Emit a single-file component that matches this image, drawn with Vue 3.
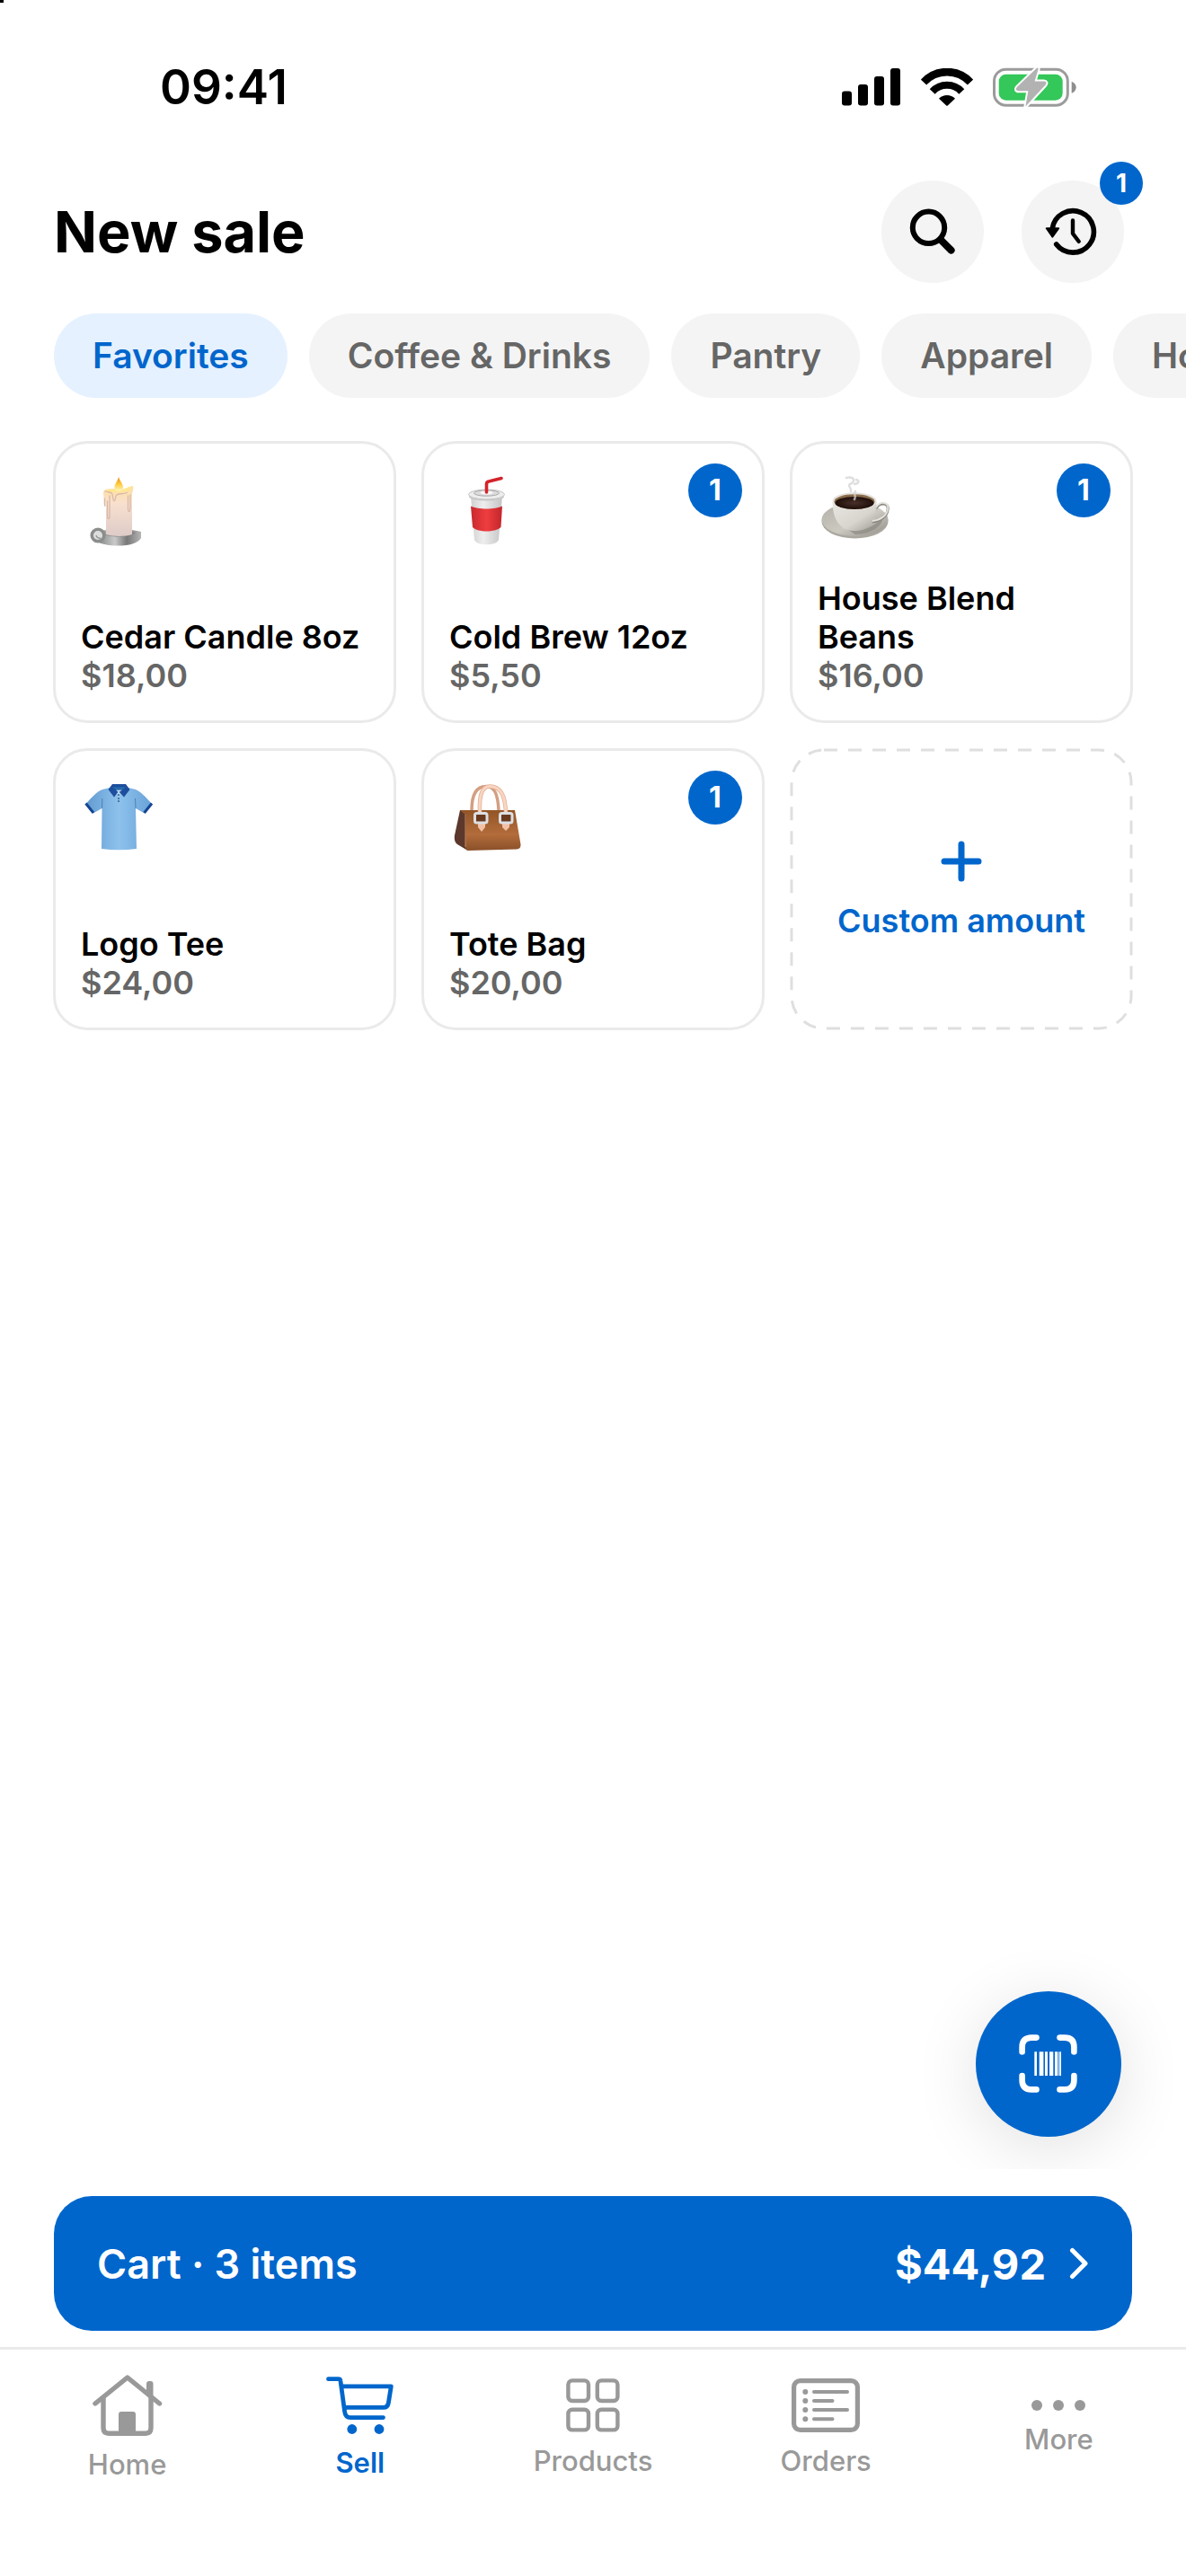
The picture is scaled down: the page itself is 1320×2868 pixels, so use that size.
<template>
  <div class="app">
    <div class="status-bar">
      <span class="time">09:41</span>
      <div class="status-icons">
        <svg width="66" height="42" viewBox="0 0 66 42">
          <rect x="0" y="25.5" width="11" height="16" rx="3" />
          <rect x="18" y="18" width="11" height="23.5" rx="3" />
          <rect x="36" y="9" width="11" height="32.5" rx="3" />
          <rect x="54" y="0" width="11" height="41.5" rx="3" />
        </svg>
        <svg width="58" height="42" viewBox="0 0 58 42" fill="none" stroke="#000">
          <path d="M3 15.5A35.3 35.3 0 0 1 55 15.5" stroke-width="8.6" />
          <path d="M12.7 26A22 22 0 0 1 45.3 26" stroke-width="8" />
          <path d="M20 33.7A13 13 0 0 1 38 33.7L29.8 41.5Q29 42.2 28.2 41.5Z" fill="#000" stroke="none" />
        </svg>
        <svg width="94" height="46" viewBox="0 0 94 46">
          <rect x="1.5" y="3.2" width="81.8" height="40" rx="13" fill="none" stroke="#9b9b9b" stroke-width="3" />
          <rect x="6.7" y="8.7" width="71" height="29" rx="8" fill="#34c759" />
          <path d="M87.7 16.7C91 18 92.7 20.5 92.7 23.2S91 28.5 87.7 29.8Z" fill="#8e8e8e" />
          <path
            d="M48.6 2L27.3 22.6C25 25 25.8 27.2 28.6 27.2H39.4L36.4 44.6L58.4 20.8C60.4 18.4 59.4 16.4 56.8 16.4H46.6L50.6 3C50.8 1.4 49.6 1 48.6 2Z"
            fill="#b2b2b2" stroke="#fff" stroke-width="4" paint-order="stroke" stroke-linejoin="round"
          />
        </svg>
      </div>
    </div>

    <header class="header">
      <h1>New sale</h1>
      <div class="header-actions">
        <button class="round-button" aria-label="Search">
          <svg width="54" height="54" viewBox="0 0 54 54" fill="none" stroke="#000" stroke-linecap="round">
            <circle cx="22.5" cy="22.3" r="17.7" stroke-width="6" />
            <path d="M37 37L47.6 47.6" stroke-width="8" />
          </svg>
        </button>
        <button class="round-button" aria-label="History">
          <svg width="64" height="64" viewBox="0 0 64 64" fill="none" stroke="#000" stroke-linecap="round" stroke-linejoin="round">
            <path d="M13.7 46A23.2 23.2 0 1 0 9.2 28.5" stroke-width="5.6" />
            <path d="M2.8 28.2H16.2L9.4 37.6Z" fill="#000" stroke-width="2" />
            <path d="M32 19.4V34L38.6 42.8" stroke-width="4.4" />
          </svg>
          <span class="badge badge-small">1</span>
        </button>
      </div>
    </header>

    <nav class="categories">
      <button
        v-for="category in categories"
        :key="category"
        class="chip"
        :class="{ selected: category === currentCategory }"
        @click="currentCategory = category"
      >
        {{ category }}
      </button>
    </nav>

    <main class="content">
      <div class="product-grid">
        <button v-for="product in products" :key="product.name" class="card">
          <!-- candle -->
          <svg v-if="product.icon === 'candle'" class="picture" viewBox="0 0 78 78">
            <defs>
              <linearGradient id="wax" x1="0" y1="0" x2="0" y2="1">
                <stop offset="0" stop-color="#ffdf9e" />
                <stop offset=".35" stop-color="#f8e0cf" />
                <stop offset="1" stop-color="#decbc8" />
              </linearGradient>
              <linearGradient id="metal" x1="0" y1="0" x2="1" y2="0">
                <stop offset="0" stop-color="#6f7271" />
                <stop offset=".45" stop-color="#c9cac9" />
                <stop offset=".7" stop-color="#777" />
                <stop offset="1" stop-color="#b5b5b5" />
              </linearGradient>
              <linearGradient id="flame" x1="0" y1="0" x2="0" y2="1">
                <stop offset="0" stop-color="#e58a1c" />
                <stop offset=".5" stop-color="#ffcb3d" />
                <stop offset="1" stop-color="#fff6c4" />
              </linearGradient>
            </defs>
            <path d="M10 63C18 59 50 58 63 62V69C60 75 49 77.5 38 77.5C26 77.5 17 75.5 12 72Z" fill="url(#metal)" />
            <path d="M23 65C30 61 48 61 57 63C52 68 29 69 23 65Z" fill="#858585" />
            <circle cx="15" cy="66" r="6.8" fill="#dedede" stroke="#8b8d8b" stroke-width="3.5" />
            <path d="M13 66a4 4 0 0 0 5 3" fill="none" stroke="#999" stroke-width="1.5" />
            <path d="M22 16C27 13 37 15 42 15C47 15 50 11 54 11C55 15 53 18 53 21V65C46 67.5 31 67.5 24 65V34C21 33 22 28 21.5 24C21 20 20.5 18 22 16Z" fill="url(#wax)" />
            <path d="M27 18C32 17 46 21 53 12C48 11 45 16 38 16C32 16 27 14 23 16Z" fill="#ffe78b" />
            <path d="M23 17C29 19 31 17 31.5 23C32 29 34 29 34.5 24C35 18 42 21 47.5 18.5M28 22V45C27.5 49 25.5 48 25.5 43V28M48.5 22V37C49 41 51 40 51 36V21M22.5 25V33" fill="none" stroke="#d9b9a8" stroke-width="1.3" stroke-linecap="round" />
            <path d="M38 1C40 7 43.5 9 43 13.5C42.5 18 34 18 33.5 13.5C33 9 37 6 38 1Z" fill="url(#flame)" />
          </svg>

          <!-- cup with straw -->
          <svg v-else-if="product.icon === 'cup'" class="picture" viewBox="0 0 78 78">
            <defs>
              <linearGradient id="cup" x1="0" y1="0" x2="1" y2="0">
                <stop offset="0" stop-color="#d0d0d0" />
                <stop offset=".4" stop-color="#eee" />
                <stop offset="1" stop-color="#c4c4c4" />
              </linearGradient>
              <linearGradient id="sleeve" x1="0" y1="0" x2="1" y2="0">
                <stop offset="0" stop-color="#c62a30" />
                <stop offset=".5" stop-color="#ef3d3f" />
                <stop offset="1" stop-color="#c2262b" />
              </linearGradient>
            </defs>
            <path d="M20 22H55L51 71C49 78 26 78 24 71Z" fill="url(#cup)" />
            <path d="M20 33.5C28 37.5 47 37.5 55 33.5L53.5 57C47 63 28 63 22 57Z" fill="url(#sleeve)" />
            <ellipse cx="37.5" cy="23" rx="19.5" ry="4.5" fill="#c9c9c9" />
            <ellipse cx="37.5" cy="20.5" rx="20" ry="5.5" fill="#ededed" stroke="#c4c4c4" stroke-width="1" />
            <ellipse cx="37.5" cy="19" rx="14" ry="3.2" fill="#dcdcdc" stroke="#aaa" stroke-width="1" />
            <ellipse cx="37.5" cy="18.5" rx="7" ry="2" fill="#f8f8f8" />
            <path d="M37.5 18V9Q37.5 6.5 40 6L54 2.5" fill="none" stroke="#d4232b" stroke-width="3.6" stroke-linecap="round" stroke-linejoin="round" />
          </svg>

          <!-- coffee -->
          <svg v-else-if="product.icon === 'coffee'" class="picture" viewBox="0 0 78 78">
            <defs>
              <linearGradient id="china" x1="0" y1="0" x2="1" y2="1">
                <stop offset="0" stop-color="#e9e7e2" />
                <stop offset=".6" stop-color="#d8d5ce" />
                <stop offset="1" stop-color="#a29e96" />
              </linearGradient>
              <linearGradient id="saucer" x1="0" y1="0" x2="1" y2="1">
                <stop offset="0" stop-color="#b3b0a8" />
                <stop offset=".55" stop-color="#ccc9c1" />
                <stop offset="1" stop-color="#8e8b84" />
              </linearGradient>
              <radialGradient id="brew">
                <stop offset="0" stop-color="#49302a" />
                <stop offset="1" stop-color="#1f0e09" />
              </radialGradient>
            </defs>
            <ellipse cx="37.5" cy="50.5" rx="37" ry="19" fill="#aaa79f" />
            <ellipse cx="37.5" cy="48.5" rx="37" ry="18.5" fill="url(#saucer)" />
            <path d="M30 60C45 64 62 55 68 45C71 54 55 65 38 65Z" fill="#7c7972" opacity=".5" />
            <path d="M61 36C65 29 76 29 74 38C73 45 66 50 57 51" fill="none" stroke="#8c8982" stroke-width="3" />
            <path d="M61 35C65 28 76 28 74 37C73 44 66 49 57 50" fill="none" stroke="#e6e4df" stroke-width="1.8" />
            <path d="M12.5 29C13 46 19 61 37 61S61 46 61.5 29Z" fill="url(#china)" />
            <ellipse cx="37" cy="28" rx="24.5" ry="9.8" fill="#e5e3de" />
            <ellipse cx="37" cy="28.5" rx="22.5" ry="8.3" fill="#8b6d4c" />
            <ellipse cx="37" cy="30" rx="21.5" ry="7" fill="url(#brew)" />
            <path d="M28 2C38 0 38 7 32 9C29 11 34 13 33 17M39 4C42 5 43 8 37 9M38 17C36 20 39 23 37 26" fill="none" stroke="#d4d4d4" stroke-width="2.5" stroke-linecap="round" opacity=".75" />
          </svg>

          <!-- polo shirt -->
          <svg v-else-if="product.icon === 'shirt'" class="picture" viewBox="0 0 78 78">
            <defs>
              <linearGradient id="cloth" x1="0" y1="0" x2="1" y2="0">
                <stop offset="0" stop-color="#629bd2" />
                <stop offset=".5" stop-color="#8ec2ec" />
                <stop offset="1" stop-color="#68a2d8" />
              </linearGradient>
            </defs>
            <path d="M28 5L20 7C14 9 8 16 2 22.5L10.5 33L19.500 28L19 73Q38 75.5 58 73L57 28L66 33L74.5 22.5C68 15 62 9 57 7L49 5Z" fill="url(#cloth)" />
            <path d="M19.5 28L19.8 17M57 28L56.5 17" stroke="#4b83bb" stroke-width="1" />
            <path d="M1.5 22.5L10 33M75 22.5L66.5 33" stroke="#144594" stroke-width="3" />
            <path d="M31 4H46L38 15Z" fill="#b7d7ee" />
            <path d="M31 1H46L50.5 7L44 15.5L38 9L33 15.5L26.5 7Z" fill="#1d4f9e" />
            <path d="M31 4.5H46L43 6.5H34Z" fill="#2773ae" />
            <path d="M35 7.5L38 10.5L42 7.5Z" fill="#b7d7ee" />
            <g fill="#315e8b">
              <circle cx="38" cy="13" r="1" />
              <circle cx="38" cy="17" r="1" />
              <circle cx="38" cy="20" r="1" />
            </g>
          </svg>

          <!-- handbag -->
          <svg v-else class="picture" viewBox="0 0 78 78">
            <defs>
              <linearGradient id="leather" x1="0" y1="0" x2="0" y2="1">
                <stop offset="0" stop-color="#925527" />
                <stop offset=".6" stop-color="#b36c3b" />
                <stop offset="1" stop-color="#8a5029" />
              </linearGradient>
            </defs>
            <path d="M21 30C21 11 27 3.5 37 3.5C47 3.5 50 13 51 30" fill="none" stroke="#d39f82" stroke-width="3.5" />
            <path d="M8 30L2 58Q1 65 5 68L15 74L20 30Z" fill="#5b382b" />
            <path d="M8 30H69L75.5 68Q76 73 71 73.5L17 75Q14 75 14 70L15 36Z" fill="url(#leather)" />
            <path d="M14 35V71" stroke="#c9895d" stroke-width="1" />
            <path d="M30 32C29 10 34 3.5 41 3.5C53 3.5 58 13 59 32" fill="none" stroke="#e2ae93" stroke-width="4.5" />
            <path d="M30 32C29 10 34 3.5 41 3.5C53 3.5 58 13 59 32" fill="none" stroke="#f9d5c1" stroke-width="3" />
            <path d="M28 40H36V49L32 54L28 49ZM55 40H63V49L59 53L55 49Z" fill="#f2c1a6" />
            <g fill="#68391d" stroke="#dcdfe2" stroke-width="3">
              <rect x="24.5" y="33.5" width="13.5" height="10.5" rx="2" />
              <rect x="52.5" y="33.5" width="13.5" height="10.5" rx="2" />
            </g>
          </svg>

          <span class="card-name">{{ product.name }}</span>
          <span class="card-price">{{ product.price }}</span>
          <span v-if="product.count" class="badge">{{ product.count }}</span>
        </button>

        <button class="card card-custom">
          <svg class="dashes" aria-hidden="true"><rect x="2" y="2" rx="36" /></svg>
          <svg width="46" height="46" viewBox="0 0 46 46">
            <path d="M23 4V42M4 23H42" stroke="#0066cc" stroke-width="7" stroke-linecap="round" />
          </svg>
          Custom amount
        </button>
      </div>

      <button class="scan-button" aria-label="Scan barcode">
        <svg width="66" height="66" viewBox="0 0 66 66" fill="none" stroke="#fff" stroke-width="6.6" stroke-linecap="round">
          <path d="M3.6 19.5V14Q3.6 3.6 14 3.6H19.5M45.5 3.6H51Q61.4 3.6 61.4 14V19.5M61.4 46V51Q61.4 61.4 51 61.4H45.5M19.5 61.4H14Q3.6 61.4 3.6 51V46" />
          <g fill="#fff" stroke="none">
            <rect x="17.3" y="19.3" width="2.7" height="26.7" />
            <rect x="22.7" y="19.3" width="4.7" height="26.7" />
            <rect x="29" y="19.3" width="3" height="26.7" />
            <rect x="34" y="19.3" width="4.3" height="26.7" />
            <rect x="40" y="19.3" width="3.3" height="26.7" />
            <rect x="43.9" y="19.3" width="1" height="26.7" opacity=".7" />
            <rect x="45.3" y="19.3" width="1.7" height="26.7" />
          </g>
        </svg>
      </button>
    </main>

    <button class="cart-bar">
      <span>Cart · 3 items</span>
      <span class="cart-total">$44,92</span>
      <svg width="22" height="36" viewBox="0 0 22 36" fill="none" stroke="#fff" stroke-width="5" stroke-linecap="round" stroke-linejoin="round">
        <path d="M3.5 3.5L18 18L3.5 32.5" />
      </svg>
    </button>

    <nav class="tab-bar">
      <a
        v-for="tab in tabs"
        :key="tab"
        href="#"
        class="tab"
        :class="{ selected: tab === currentTab }"
        @click.prevent="currentTab = tab"
      >
        <svg v-if="tab === 'Home'" width="78" height="68" viewBox="0 0 78 68" fill="none" stroke="currentColor" stroke-width="5.4" stroke-linecap="round" stroke-linejoin="round">
          <path d="M3 32L38.8 3L74.5 32" />
          <path d="M12 26V59Q12 65.2 18 65.2H59Q65 65.2 65 59V26" />
          <path d="M60 20V10Q60 7 63 7H64.5Q67.5 7 67.5 10V26Z" fill="currentColor" stroke="none" />
          <path d="M29 65V44Q29 41 32 41H45Q48 41 48 44V65Z" fill="currentColor" stroke="none" />
        </svg>
        <svg v-else-if="tab === 'Sell'" width="76" height="64" viewBox="0 0 76 64" fill="none" stroke="currentColor" stroke-width="4.8" stroke-linecap="round" stroke-linejoin="round">
          <path d="M2.5 2.7H13.5Q15.8 2.7 16 5L20.6 39Q21.4 45.6 27 45.6H63.5" />
          <path d="M17.5 10.8H72.3L69.4 29Q68.5 34.4 64 34.4H21" />
          <circle cx="28.8" cy="58.5" r="5.4" fill="currentColor" stroke="none" />
          <circle cx="59" cy="58.5" r="5.4" fill="currentColor" stroke="none" />
        </svg>
        <svg v-else-if="tab === 'Products'" width="60" height="60" viewBox="0 0 60 60" fill="none" stroke="currentColor" stroke-width="4.4">
          <rect x="2.4" y="2.4" width="22.6" height="22.6" rx="4.5" />
          <rect x="34.8" y="2.4" width="22.6" height="22.6" rx="4.5" />
          <rect x="2.4" y="34.8" width="22.6" height="22.6" rx="4.5" />
          <rect x="34.8" y="34.8" width="22.6" height="22.6" rx="4.5" />
        </svg>
        <svg v-else-if="tab === 'Orders'" width="76" height="60" viewBox="0 0 76 60" fill="none" stroke="currentColor" stroke-width="4" stroke-linecap="round">
          <rect x="2.6" y="2.6" width="70.8" height="54.8" rx="7" stroke-width="5.2" />
          <path d="M25 15H62M25 25H45.5M25 35H62M25 45.3H45.5" />
          <path d="M15.3 15h.01M15.3 25h.01M15.3 35h.01M15.3 45.3h.01" stroke-width="6" />
        </svg>
        <svg v-else width="62" height="12" viewBox="0 0 62 12" fill="currentColor">
          <circle cx="7" cy="6" r="6" />
          <circle cx="31" cy="6" r="6" />
          <circle cx="55" cy="6" r="6" />
        </svg>
        {{ tab }}
      </a>
    </nav>
  </div>
</template>

<script setup>
import { ref } from 'vue'

const categories = ['Favorites', 'Coffee & Drinks', 'Pantry', 'Apparel', 'Home']
const currentCategory = ref('Favorites')

const products = ref([
  { name: 'Cedar Candle 8oz', price: '$18,00', icon: 'candle', count: 0 },
  { name: 'Cold Brew 12oz', price: '$5,50', icon: 'cup', count: 1 },
  { name: 'House Blend Beans', price: '$16,00', icon: 'coffee', count: 1 },
  { name: 'Logo Tee', price: '$24,00', icon: 'shirt', count: 0 },
  { name: 'Tote Bag', price: '$20,00', icon: 'bag', count: 1 }
])

const tabs = ['Home', 'Sell', 'Products', 'Orders', 'More']
const currentTab = ref('Sell')
</script>

<style>
body {
  margin: 0;
  background: #fff;
}
</style>

<style scoped>
.app {
  position: relative;
  display: flex;
  flex-direction: column;
  min-height: 100vh;
  overflow: hidden;
  background: #fff;
  color: #000;
  font-family: Inter, "Liberation Sans", sans-serif;
}

/* small mark in the screen corner */
.app::before {
  content: "";
  position: absolute;
  top: 0;
  left: 0;
  width: 4px;
  height: 3px;
  background: #000;
}

button {
  border: 0;
  padding: 0;
  background: none;
  font-family: inherit;
  color: inherit;
  cursor: pointer;
}

svg {
  display: block;
  flex-shrink: 0;
}

/* Status bar */
.status-bar {
  display: flex;
  align-items: center;
  justify-content: space-between;
  height: 194px;
  padding: 0 121px 0 178px;
}

.time {
  font-size: 53px;
  font-weight: 600;
}

.status-icons {
  display: flex;
  align-items: center;
  gap: 22px;
}

/* Header */
.header {
  display: flex;
  align-items: center;
  justify-content: space-between;
  padding: 7px 69px 34px 60px;
}

h1 {
  margin: 0;
  font-size: 63px;
  font-weight: 700;
}

.header-actions {
  display: flex;
  gap: 42px;
}

.round-button {
  position: relative;
  display: flex;
  align-items: center;
  justify-content: center;
  width: 114px;
  height: 114px;
  border-radius: 50%;
  background: #f4f4f4;
}

.badge {
  position: absolute;
  top: 22px;
  right: 22px;
  width: 60px;
  border-radius: 50%;
  background: #0066cc;
  color: #fff;
  font-size: 32px;
  font-weight: 700;
  line-height: 60px;
  text-align: center;
}

.badge-small {
  top: -21px;
  right: -21px;
  width: 48px;
  font-size: 28px;
  line-height: 48px;
}

/* Categories */
.categories {
  display: flex;
  gap: 24px;
  padding-left: 60px;
}

.chip {
  flex-shrink: 0;
  padding: 0 43px;
  border-radius: 47px;
  background: #f4f4f4;
  color: #666;
  font-size: 39px;
  font-weight: 600;
  line-height: 94px;
}

.chip.selected {
  background: #e5f1ff;
  color: #0066cc;
}

/* Products */
.content {
  position: relative;
  flex: 1;
  overflow: hidden;
  margin-top: 48px;
  padding: 0 59px;
}

.product-grid {
  display: grid;
  grid-template-columns: repeat(3, 1fr);
  gap: 28px;
}

.card {
  position: relative;
  display: flex;
  flex-direction: column;
  align-items: flex-start;
  height: 314px;
  padding: 36px 28px 28px;
  border: 3px solid #eaeaea;
  border-radius: 38px;
  font-size: 36px;
  font-weight: 600;
  line-height: 43px;
  text-align: left;
}

.picture {
  width: 78px;
  height: 78px;
  margin: 0 0 auto 4px;
}

.card-price {
  color: #666;
}

.card-custom {
  align-items: center;
  justify-content: center;
  gap: 22px;
  padding: 2px 0 0;
  border: 0;
  color: #0066cc;
}

.dashes {
  position: absolute;
  inset: 0;
  width: 100%;
  height: 100%;
}

.dashes rect {
  width: calc(100% - 4px);
  height: calc(100% - 4px);
  fill: none;
  stroke: #dfdfdf;
  stroke-width: 3px;
  stroke-dasharray: 15 12;
}

.scan-button {
  position: absolute;
  right: 72px;
  bottom: 36px;
  display: flex;
  align-items: center;
  justify-content: center;
  width: 162px;
  height: 162px;
  border-radius: 50%;
  background: #0066cc;
  box-shadow: 0 12px 72px rgba(0, 0, 0, 0.12);
}

/* Cart */
.cart-bar {
  display: flex;
  align-items: center;
  gap: 26px;
  height: 150px;
  margin: 30px 60px 18px;
  padding: 0 48px;
  border-radius: 42px;
  background: #0066cc;
  color: #fff;
  font-size: 45px;
  font-weight: 600;
}

.cart-total {
  margin-left: auto;
  font-size: 47px;
  font-weight: 700;
}

/* Tab bar */
.tab-bar {
  display: flex;
  padding: 0 12px 78px;
  border-top: 3px solid #eaeaea;
}

.tab {
  flex: 1;
  display: flex;
  flex-direction: column;
  align-items: center;
  justify-content: center;
  gap: 14px;
  height: 174px;
  color: #999;
  font-size: 31px;
  font-weight: 500;
  line-height: 36px;
  text-decoration: none;
}

.tab.selected {
  color: #0066cc;
  font-weight: 600;
}
</style>
